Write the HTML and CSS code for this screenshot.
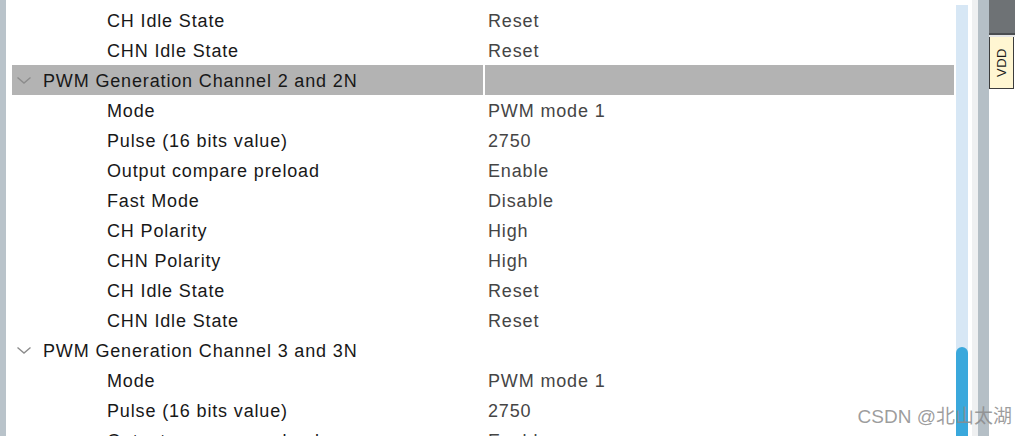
FILE: index.html
```html
<!DOCTYPE html>
<html>
<head>
<meta charset="utf-8">
<link rel="stylesheet" href="styles.css">
</head>
<body>
<div class="app">
  <div class="edge"></div>
  <div class="list">
    <div class="row"><div class="label">CH Idle State</div><div class="value">Reset</div></div>
    <div class="row"><div class="label">CHN Idle State</div><div class="value">Reset</div></div>
    <div class="row group selected">
      <div class="gcell"><svg class="chev" width="16" height="10" viewBox="0 0 16 10"><path d="M1.5 2.5 L8 8 L14.5 2.5" fill="none" stroke="#8c8c8c" stroke-width="1.4"/></svg><span class="gtext">PWM Generation Channel 2 and 2N</span></div>
      <div class="gcell"></div>
    </div>
    <div class="row"><div class="label">Mode</div><div class="value">PWM mode 1</div></div>
    <div class="row"><div class="label">Pulse (16 bits value)</div><div class="value">2750</div></div>
    <div class="row"><div class="label">Output compare preload</div><div class="value">Enable</div></div>
    <div class="row"><div class="label">Fast Mode</div><div class="value">Disable</div></div>
    <div class="row"><div class="label">CH Polarity</div><div class="value">High</div></div>
    <div class="row"><div class="label">CHN Polarity</div><div class="value">High</div></div>
    <div class="row"><div class="label">CH Idle State</div><div class="value">Reset</div></div>
    <div class="row"><div class="label">CHN Idle State</div><div class="value">Reset</div></div>
    <div class="row group">
      <div class="gcell"><svg class="chev" width="16" height="10" viewBox="0 0 16 10"><path d="M1.5 2.5 L8 8 L14.5 2.5" fill="none" stroke="#8c8c8c" stroke-width="1.4"/></svg><span class="gtext">PWM Generation Channel 3 and 3N</span></div>
      <div class="gcell"></div>
    </div>
    <div class="row"><div class="label">Mode</div><div class="value">PWM mode 1</div></div>
    <div class="row"><div class="label">Pulse (16 bits value)</div><div class="value">2750</div></div>
    <div class="row"><div class="label">Output compare preload</div><div class="value">Enable</div></div>
  </div>
  <div class="scroll"><div class="track"><div class="thumb"></div></div></div>
  <div class="sep-white"></div>
  <div class="sep-light"></div>
  <div class="sep-gray"></div>
  <div class="pins">
    <div class="pins-top"></div>
    <div class="pins-gap"></div>
    <div class="pin"><span class="pin-text">VDD</span></div>
  </div>
  <div class="watermark">CSDN @北山太湖</div>
</div>
</body>
</html>
```
FILE: styles.css
```css
html, body {
  margin: 0;
  padding: 0;
  background: #ffffff;
}
.app {
  position: relative;
  display: flex;
  width: 1015px;
  height: 436px;
  overflow: hidden;
  font-family: "Liberation Sans", Arial, sans-serif;
  font-size: 18px;
  letter-spacing: 0.85px;
}
.edge {
  width: 6px;
  flex: none;
  background: #b9c3ca;
}
.list {
  width: 942px;
  flex: none;
  padding: 5px 0 0 6px;
  margin-right: 2px;
}
.row {
  display: grid;
  grid-template-columns: 471px 469px;
  grid-template-rows: 30px;
  column-gap: 2px;
  height: 30px;
  white-space: nowrap;
}
.label {
  padding-left: 95px;
  line-height: 32px;
  color: #181818;
}
.value {
  padding-left: 3px;
  line-height: 32px;
  color: #454545;
}
.gcell {
  display: flex;
  align-items: center;
  color: #181818;
}
.gtext {
  line-height: 30px;
  padding-top: 2px;
}
.selected .gcell {
  background: #b3b3b3;
}
.chev {
  margin-left: 4px;
  margin-right: 11px;
  flex: none;
}
.scroll {
  width: 12px;
  flex: none;
  padding-top: 5px;
  display: flex;
}
.track {
  flex: 1;
  display: flex;
  flex-direction: column;
  background: #d7e7f5;
}
.thumb {
  margin-top: auto;
  height: 89px;
  background: #3aa8dc;
  border-radius: 6px 6px 0 0;
}
.sep-white {
  width: 4px;
  flex: none;
  background: #ffffff;
}
.sep-light {
  width: 6px;
  flex: none;
  background: #eff0f1;
}
.sep-gray {
  width: 11px;
  flex: none;
  background: #b5bfc6;
}
.pins {
  width: 26px;
  flex: none;
  display: flex;
  flex-direction: column;
  background: #ffffff;
}
.pins-top {
  height: 33px;
  background: #6e7275;
  border-bottom: 2px solid #4a4d50;
}
.pins-gap {
  height: 2px;
  background: #e6e6e6;
}
.pin {
  width: 23px;
  height: 51px;
  background: #fff6d2;
  border: 1px solid #3c3c3c;
  border-top: none;
  display: flex;
  align-items: center;
  justify-content: center;
}
.pin-text {
  transform: rotate(-90deg);
  font-size: 13px;
  letter-spacing: 0.5px;
  color: #1c1c1c;
  white-space: nowrap;
}
.watermark {
  position: absolute;
  right: 3px;
  bottom: 8px;
  font-family: "Liberation Sans", "Noto Sans CJK SC", sans-serif;
  font-size: 19px;
  letter-spacing: 0;
  color: rgba(140, 140, 140, 0.85);
}
```
